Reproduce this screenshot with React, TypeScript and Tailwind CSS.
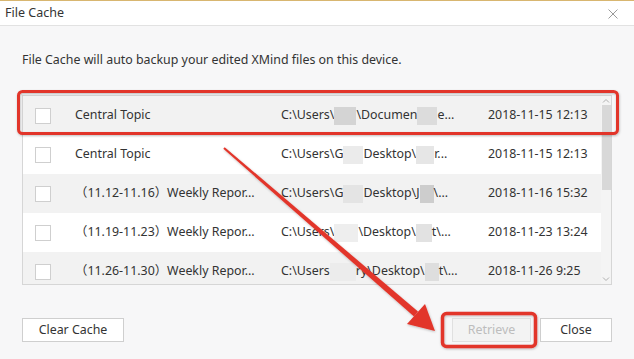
import React from "react";

type Row = {
  name: string;
  path: React.ReactNode;
  date: string;
};

const Blk = ({ w, c }: { w: string; c: string }) => (
  <span className={`inline-block h-[18px] align-middle ${w} ${c}`} />
);

const rows: Row[] = [
  {
    name: "Central Topic",
    path: (
      <>
        C:\Users\<Blk w="w-[22px]" c="bg-[#d4d4d4]" />\Documen<Blk w="w-[20px]" c="bg-[#dcdcdc]" />e...
      </>
    ),
    date: "2018-11-15 12:13",
  },
  {
    name: "Central Topic",
    path: (
      <>
        C:\Users\G<Blk w="w-[20px]" c="bg-[#ebebeb]" />Desktop\<Blk w="w-[18px]" c="bg-[#e6e6e6]" />r...
      </>
    ),
    date: "2018-11-15 12:13",
  },
  {
    name: "（11.12-11.16）Weekly Repor...",
    path: (
      <>
        C:\Users\G<Blk w="w-[20px]" c="bg-[#e4e4e4]" />Desktop\J<Blk w="w-[14px]" c="bg-[#cdcdcd]" />\...
      </>
    ),
    date: "2018-11-16 15:32",
  },
  {
    name: "（11.19-11.23）Weekly Repor...",
    path: (
      <>
        C:\Users\<Blk w="w-[24px]" c="bg-[#eeeeee]" />\Desktop\<Blk w="w-[16px]" c="bg-[#e2e2e2]" />t\...
      </>
    ),
    date: "2018-11-23 13:24",
  },
  {
    name: "（11.26-11.30）Weekly Repor...",
    path: (
      <>
        C:\Users<Blk w="w-[26px]" c="bg-[#ececec]" />ry\Desktop\<Blk w="w-[14px]" c="bg-[#dedede]" />t\...
      </>
    ),
    date: "2018-11-26 9:25",
  },
];

export default function App() {
  return (
    <div
      className="relative w-[634px] h-[359px] overflow-hidden bg-[#f7f7f8] text-[#333333]"
      style={{ fontFamily: '"Noto Sans", "Noto Sans CJK SC", sans-serif' }}
    >
      <div className="h-[1px] bg-[#d8b670]" />
      {/* title bar */}
      <div className="h-[25px] bg-white border-b border-[#e2e2e2] flex items-center justify-between pl-[5px] pr-[16px]">
        <span className="text-[12.5px] leading-none">File Cache</span>
        <svg width="10" height="10" viewBox="0 0 10 10" className="mt-[1px]">
          <path d="M0.5 0.5 L9.5 9.5 M9.5 0.5 L0.5 9.5" stroke="#9a9a9a" strokeWidth="1" />
        </svg>
      </div>

      <div className="px-[22px]">
        <p className="mt-[25px] text-[12.4px] leading-[18px]">
          File Cache will auto backup your edited XMind files on this device.
        </p>

        {/* table */}
        <div className="mt-[26px] w-[590px] h-[190px] border border-[#d6d6d6] bg-white flex overflow-hidden">
          <div className="flex-1 flex flex-col overflow-hidden">
            {rows.map((r, i) => (
              <div
                key={i}
                className={`h-[39px] shrink-0 flex items-center text-[12.4px] ${
                  i % 2 === 0 ? "bg-[#f2f2f2]" : "bg-white"
                }`}
              >
                <div className="w-[52px] pl-[12px] shrink-0">
                  <div className="w-[16px] h-[16px] border border-[#cfcfcf] bg-white" />
                </div>
                <div className="w-[206px] shrink-0 whitespace-pre">{r.name}</div>
                <div className="w-[207px] shrink-0 whitespace-pre">{r.path}</div>
                <div className="whitespace-pre">{r.date}</div>
              </div>
            ))}
          </div>
          {/* scrollbar */}
          <div className="w-[10px] bg-[#f4f4f4] flex flex-col items-center">
            <svg width="8" height="6" viewBox="0 0 8 6" className="mt-[2px]">
              <path d="M1 4.5 L4 1.5 L7 4.5" stroke="#b0b0b0" fill="none" strokeWidth="1" />
            </svg>
            <div className="mt-[1px] w-[9px] h-[85px] bg-[#d8d8d8]" />
            <div className="flex-1" />
            <svg width="8" height="6" viewBox="0 0 8 6" className="mb-[2px]">
              <path d="M1 1.5 L4 4.5 L7 1.5" stroke="#b0b0b0" fill="none" strokeWidth="1" />
            </svg>
          </div>
        </div>

        {/* buttons */}
        <div className="mt-[33px] flex items-center">
          <button className="w-[102px] h-[24px] border border-[#cfcfcf] bg-white text-[12.4px] text-[#333]">
            Clear Cache
          </button>
          <div className="flex-1" />
          <button className="w-[79px] h-[24px] border border-[#e0e0e0] bg-[#f3f3f3] text-[12.4px] text-[#bdbdbd]">
            Retrieve
          </button>
          <button className="ml-[9px] w-[72px] h-[24px] border border-[#cfcfcf] bg-white text-[12.4px] text-[#333]">
            Close
          </button>
        </div>
      </div>

      {/* annotation overlay */}
      <svg
        className="absolute inset-0 pointer-events-none"
        width="634"
        height="359"
        viewBox="0 0 634 359"
      >
        <defs>
          <filter id="sh" x="-5%" y="-5%" width="110%" height="110%">
            <feDropShadow dx="0.5" dy="1" stdDeviation="0.8" floodColor="#000" floodOpacity="0.25" />
          </filter>
        </defs>
        <g filter="url(#sh)">
          <rect x="18.5" y="91.5" width="599" height="42" rx="4" fill="none" stroke="#e2362c" strokeWidth="3" />
          <rect x="442.5" y="313.5" width="93" height="33" rx="4" fill="none" stroke="#e2362c" strokeWidth="3.5" />
          <polygon
            points="223.3,148.8 224.7,147.2 418,311.6 414,316.4"
            fill="#e2362c"
          />
          <polygon points="435,331 425,304 407,324" fill="#e2362c" />
        </g>
      </svg>
    </div>
  );
}
